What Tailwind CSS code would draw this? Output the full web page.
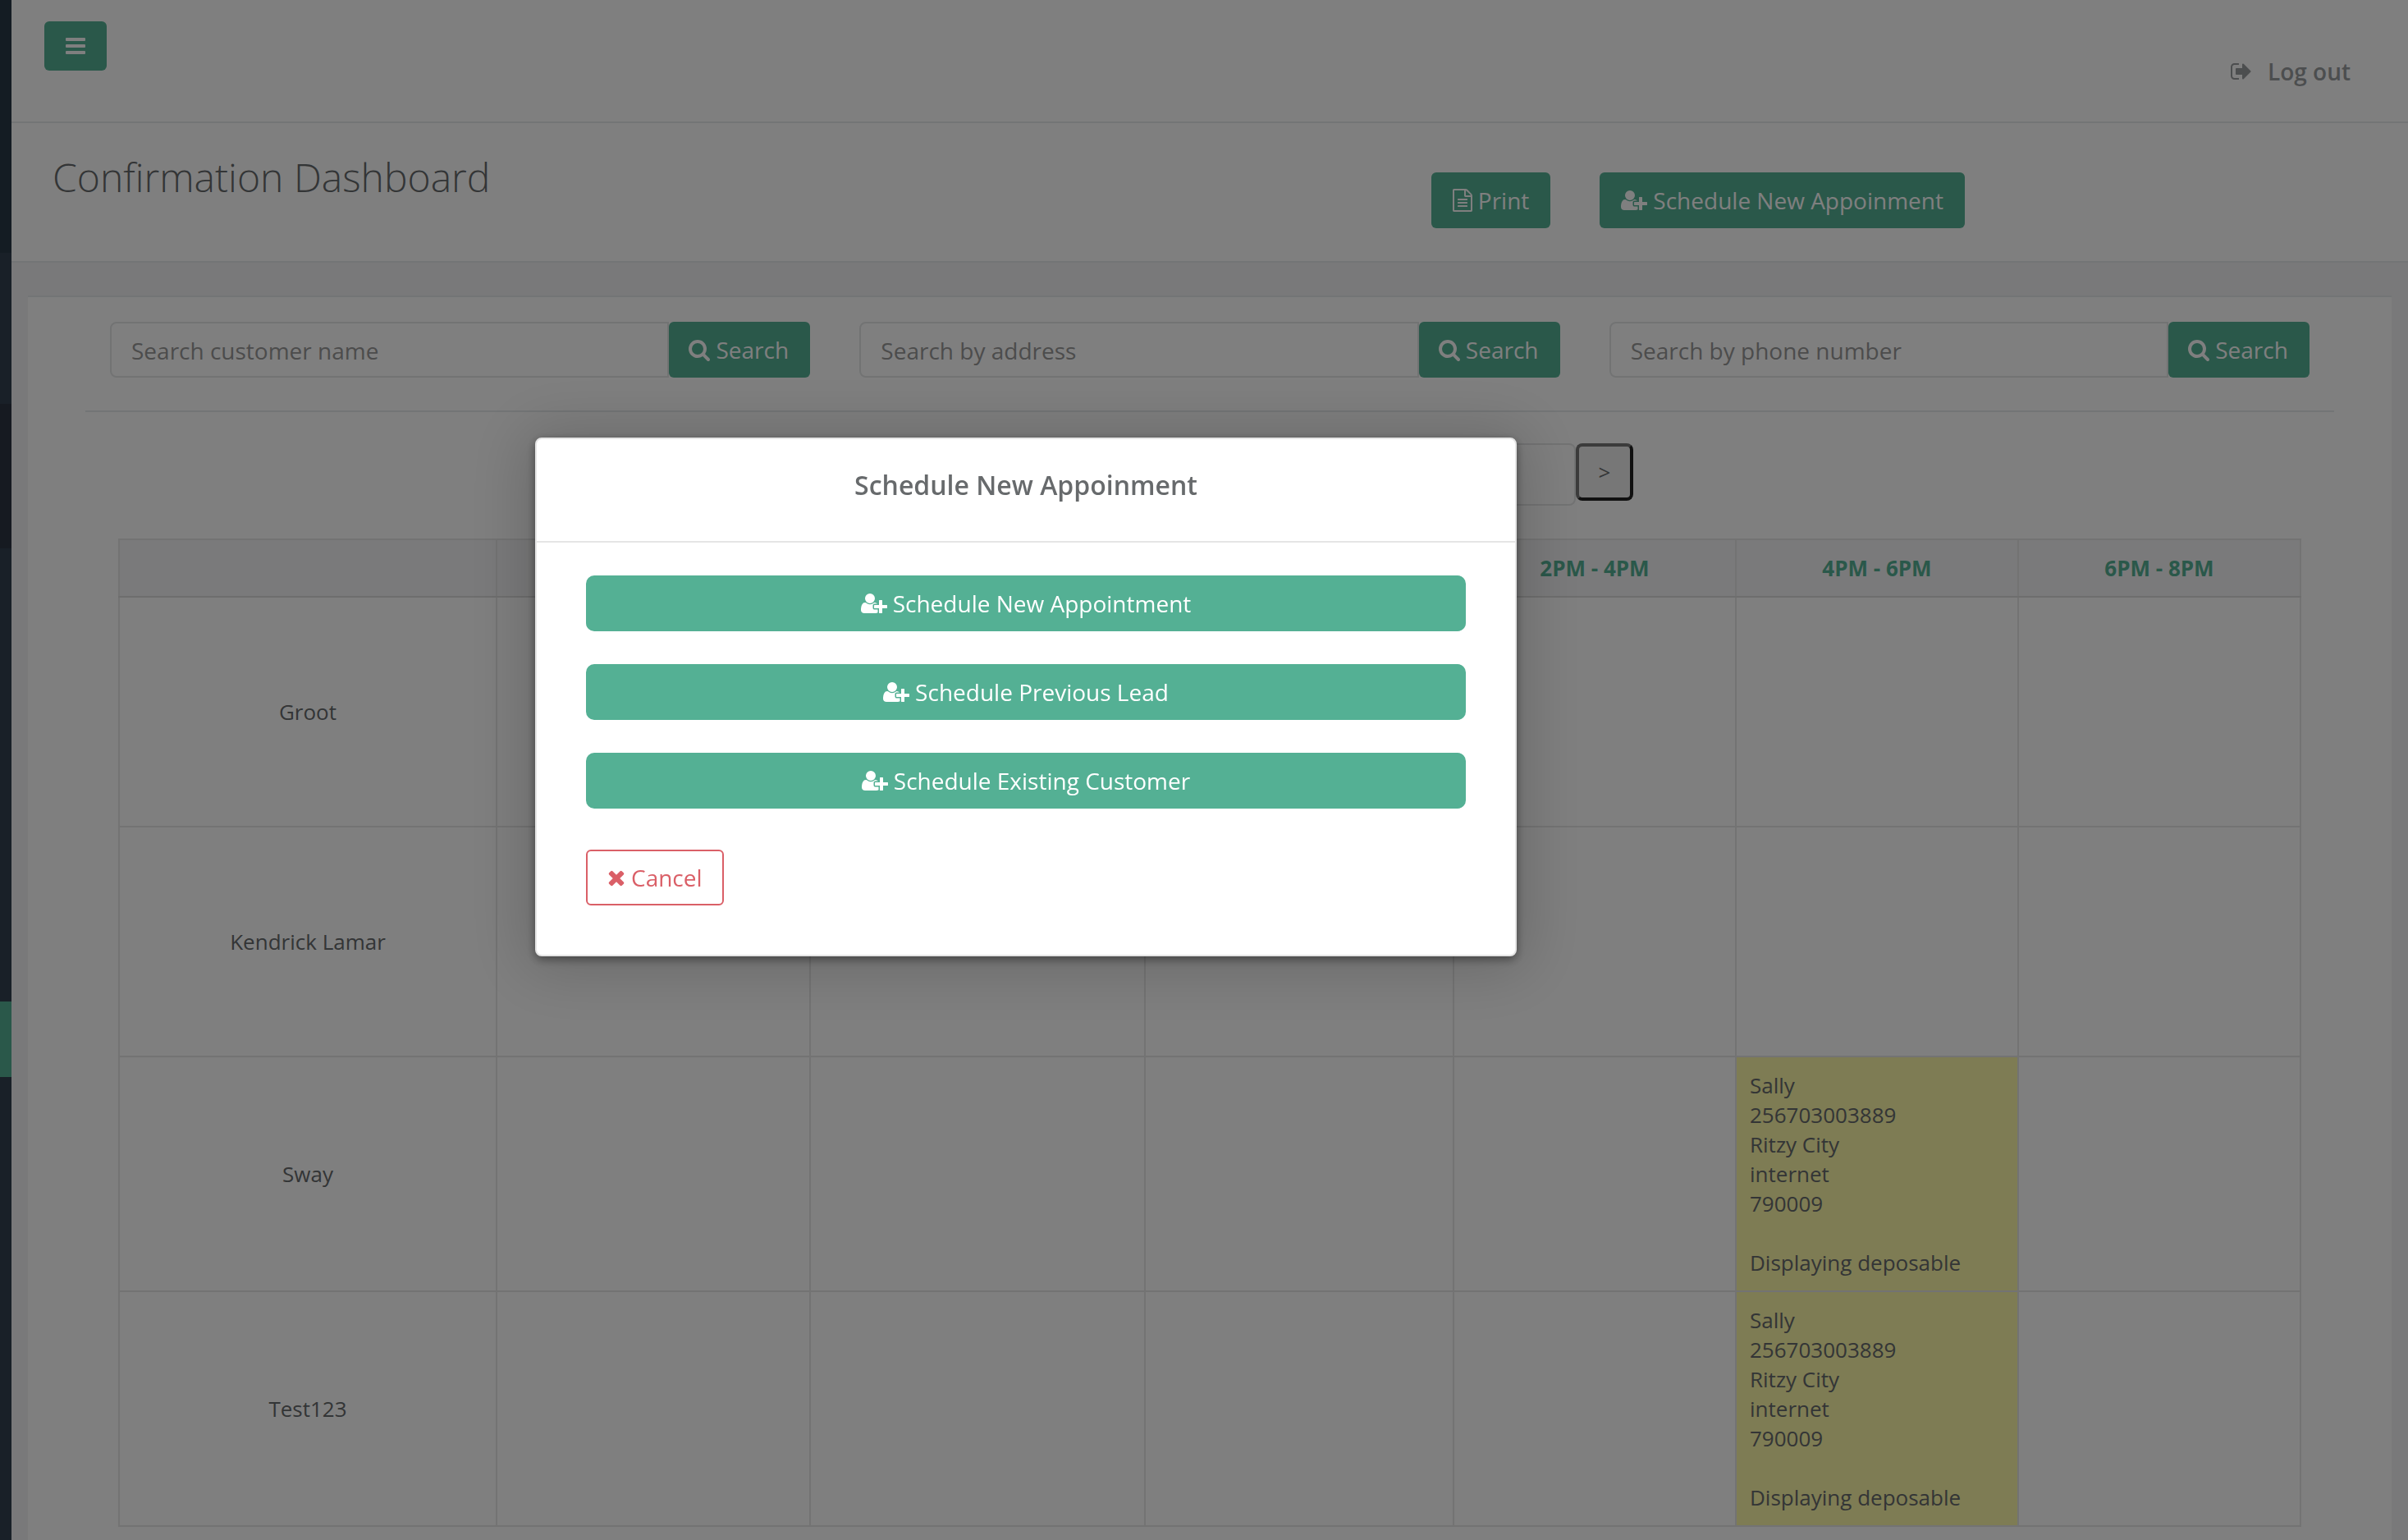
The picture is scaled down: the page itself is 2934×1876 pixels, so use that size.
<!DOCTYPE html>
<html lang="en">
<head>
<meta charset="utf-8">
<title>Confirmation Dashboard</title>
<script src="https://cdn.jsdelivr.net/npm/@tailwindcss/browser@4"></script>
</head>
<body class="font-['Open_Sans',sans-serif] text-[26px] leading-[36px] text-[#676a6c] bg-[#f3f3f4]">
<svg class="hidden" aria-hidden="true">
  <symbol id="user-plus" viewBox="0 0 2048 1792"><path d="M704 896q-159 0-271.500-112.500t-112.500-271.500 112.500-271.500 271.500-112.500 271.500 112.500 112.500 271.500-112.500 271.500-271.500 112.500zm960 128h352q13 0 22.500 9.500t9.500 22.500v192q0 13-9.500 22.500t-22.500 9.500h-352v352q0 13-9.500 22.500t-22.500 9.500h-192q-13 0-22.500-9.500t-9.500-22.500v-352h-352q-13 0-22.500-9.500t-9.500-22.500v-192q0-13 9.500-22.500t22.500-9.500h352v-352q0-13 9.500-22.500t22.500-9.500h192q13 0 22.500 9.500t9.500 22.500v352zm-736 224q0 52 38 90t90 38h256v238q-68 50-171 50h-874q-121 0-194-69t-73-190q0-53 3.500-103.500t14-109 26.500-108.500 43-97.500 62-81 85.500-53.500 111.500-20q19 0 39 17 79 61 154.500 91.500t164.500 30.500 164.500-30.500 154.500-91.500q20-17 39-17 132 0 217 96h-223q-52 0-90 38t-38 90v192z"/></symbol>
  <symbol id="search" viewBox="64 0 1664 1792"><path d="M1216 832q0-185-131.500-316.500t-316.500-131.500-316.500 131.500-131.500 316.500 131.500 316.500 316.500 131.500 316.500-131.500 131.500-316.500zm512 832q0 52-38 90t-90 38q-54 0-90-38l-343-342q-179 124-399 124-143 0-273.500-55.500t-225-150-150-225-55.500-273.500 55.500-273.500 150-225 225-150 273.500-55.500 273.500 55.500 225 150 150 225 55.500 273.500q0 220-124 399l343 343q37 37 37 90z"/></symbol>
  <symbol id="sign-out" viewBox="0 0 1792 1792"><path d="M704 1440q0 4 1 20t.5 26.500-3 23.500-10 19.500-20.500 6.500h-320q-119 0-203.500-84.500t-84.500-203.500v-704q0-119 84.500-203.500t203.500-84.500h320q13 0 22.500 9.500t9.500 22.500q0 4 1 20t.5 26.500-3 23.500-10 19.500-20.500 6.500h-320q-66 0-113 47t-47 113v704q0 66 47 113t113 47h312l11.500 1 11.500 3 8 5.500 7 9 2 13.500zm928-544q0 26-19 45l-544 544q-19 19-45 19t-45-19-19-45v-288h-448q-26 0-45-19t-19-45v-384q0-26 19-45t45-19h448v-288q0-26 19-45t45-19 45 19l544 544q19 19 19 45z"/></symbol>
  <symbol id="times" viewBox="192 0 1408 1792"><path d="M1490 1322q0 40-28 68l-136 136q-28 28-68 28t-68-28l-294-294-294 294q-28 28-68 28t-68-28l-136-136q-28-28-28-68t28-68l294-294-294-294q-28-28-28-68t28-68l136-136q28-28 68-28t68 28l294 294 294-294q28-28 68-28t68 28l136 136q28 28 28 68t-28 68l-294 294 294 294q28 28 28 68z"/></symbol>
  <symbol id="file-text" viewBox="128 0 1536 1792"><path d="M1596 380q28 28 48 76t20 88v1152q0 40-28 68t-68 28h-1344q-40 0-68-28t-28-68v-1600q0-40 28-68t68-28h896q40 0 88 20t76 48zm-444-244v376h376q-10-29-22-41l-313-313q-12-12-41-22zm384 1528v-1024h-416q-40 0-68-28t-28-68v-416h-768v1536h1280zm-1024-864q0-14 9-23t23-9h704q14 0 23 9t9 23v64q0 14-9 23t-23 9h-704q-14 0-23-9t-9-23v-64zm736 224q14 0 23 9t9 23v64q0 14-9 23t-23 9h-704q-14 0-23-9t-9-23v-64q0-14 9-23t23-9h704zm0 256q14 0 23 9t9 23v64q0 14-9 23t-23 9h-704q-14 0-23-9t-9-23v-64q0-14 9-23t23-9h704z"/></symbol>
</svg>

<div class="flex h-screen overflow-hidden">
  <!-- Collapsed navigation -->
  <aside class="flex w-[14px] shrink-0 flex-col bg-[#324150]">
    <div class="h-[308px] bg-[#293846]"></div>
    <div class="h-[184px]"></div>
    <div class="h-[176px] bg-[#2c3443]"></div>
    <div class="h-[552px]"></div>
    <div class="h-[92px] bg-[#54b094]"></div>
  </aside>

  <div class="flex min-w-0 flex-1 flex-col">
    <nav class="flex h-[150px] shrink-0 items-start justify-between border-b-2 border-[#e7eaec] bg-white pt-[26px] pr-[70px] pl-10">
      <button type="button" aria-label="Toggle menu" class="flex h-[60px] w-[76px] items-center justify-center rounded-md bg-[#54b094] text-white">
        <svg class="h-5 w-6 fill-current" viewBox="0 0 24 20"><rect width="24" height="4" rx="1"/><rect y="8" width="24" height="4" rx="1"/><rect y="16" width="24" height="4" rx="1"/></svg>
      </button>
      <a href="#" class="mt-[41px] flex items-center gap-[18px] text-[28px] leading-10 font-semibold text-[#999c9e]">
        <svg class="size-7 fill-current"><use href="#sign-out"/></svg>Log out
      </a>
    </nav>

    <header class="flex h-[170px] shrink-0 items-start justify-between border-b-2 border-[#e7eaec] bg-white pr-[540px] pl-[50px]">
      <h1 class="mt-[39px] text-[48px] leading-[53px] font-light">Confirmation Dashboard</h1>
      <div class="mt-[60px] flex gap-[60px] text-[28px] leading-10 text-white">
        <button type="button" class="flex h-[68px] items-center gap-[7px] rounded-md bg-[#54b094] px-[26px] pb-px"><svg class="h-7 w-6 fill-current"><use href="#file-text"/></svg>Print</button>
        <button type="button" class="flex h-[68px] items-center gap-[7px] rounded-md bg-[#54b094] px-[26px] pb-px"><svg class="h-7 w-8 fill-current"><use href="#user-plus"/></svg>Schedule New Appoinment</button>
      </div>
    </header>

    <main class="mx-5 mt-10 flex-1 border-t-2 border-[#e7eaec] bg-white px-[70px] pt-[30px]">
      <div class="grid grid-cols-3 gap-[60px] border-b-2 border-[#e7eaec] px-[30px] pb-10 text-[28px] leading-10">
        <form class="flex">
          <input type="text" aria-label="Customer name" placeholder="Search customer name" class="h-[68px] min-w-0 flex-1 rounded-l-lg border-2 border-[#e5e6e7] px-6 pt-[2px] placeholder:text-[#999]">
          <button type="button" class="flex w-[172px] items-center justify-center gap-[7px] rounded-md bg-[#54b094] pr-[2px] pb-px text-white"><svg class="h-7 w-[26px] fill-current"><use href="#search"/></svg>Search</button>
        </form>
        <form class="flex">
          <input type="text" aria-label="Address" placeholder="Search by address" class="h-[68px] min-w-0 flex-1 rounded-l-lg border-2 border-[#e5e6e7] px-6 pt-[2px] placeholder:text-[#999]">
          <button type="button" class="flex w-[172px] items-center justify-center gap-[7px] rounded-md bg-[#54b094] pr-[2px] pb-px text-white"><svg class="h-7 w-[26px] fill-current"><use href="#search"/></svg>Search</button>
        </form>
        <form class="flex">
          <input type="text" aria-label="Phone number" placeholder="Search by phone number" class="h-[68px] min-w-0 flex-1 rounded-l-lg border-2 border-[#e5e6e7] px-6 pt-[2px] placeholder:text-[#999]">
          <button type="button" class="flex w-[172px] items-center justify-center gap-[7px] rounded-md bg-[#54b094] pr-[2px] pb-px text-white"><svg class="h-7 w-[26px] fill-current"><use href="#search"/></svg>Search</button>
        </form>
      </div>

      <div class="mt-[38px] flex items-start justify-center">
        <button type="button" class="size-[70px] rounded-lg border-4 border-[#777] bg-[#efefef]">&lt;</button>
        <input type="text" aria-label="Date" class="h-[76px] w-[892px] rounded-lg border-2 border-[#e5e6e7] px-6">
        <button type="button" class="size-[70px] rounded-lg border-4 border-t-[#777] border-r-[#222] border-b-[#222] border-l-[#777] bg-[#efefef]">&gt;</button>
      </div>

      <div class="mt-10 px-10">
        <table class="w-full table-fixed border-collapse text-center">
          <colgroup>
            <col class="w-[460px]"><col class="w-[382px]"><col class="w-[408px]"><col class="w-[376px]"><col class="w-[344px]"><col class="w-[344px]"><col>
          </colgroup>
          <thead class="bg-[#f5f5f6] text-[#54b094]">
            <tr class="h-[70px]">
              <td class="border-2 border-[#e7e7e7] border-b-[#ddd]"></td>
              <th class="border-2 border-[#e7e7e7] border-b-[#ddd] font-bold">8AM - 10AM</th>
              <th class="border-2 border-[#e7e7e7] border-b-[#ddd] font-bold">10AM - 12PM</th>
              <th class="border-2 border-[#e7e7e7] border-b-[#ddd] font-bold">12PM - 2PM</th>
              <th class="border-2 border-[#e7e7e7] border-b-[#ddd] font-bold">2PM - 4PM</th>
              <th class="border-2 border-[#e7e7e7] border-b-[#ddd] font-bold">4PM - 6PM</th>
              <th class="border-2 border-[#e7e7e7] border-b-[#ddd] font-bold">6PM - 8PM</th>
            </tr>
          </thead>
          <tbody>
            <tr class="h-[280px]">
              <th class="border-2 border-[#e7e7e7] font-normal">Groot</th>
              <td class="border-2 border-[#e7e7e7]"></td><td class="border-2 border-[#e7e7e7]"></td><td class="border-2 border-[#e7e7e7]"></td><td class="border-2 border-[#e7e7e7]"></td><td class="border-2 border-[#e7e7e7]"></td><td class="border-2 border-[#e7e7e7]"></td>
            </tr>
            <tr class="h-[280px]">
              <th class="border-2 border-[#e7e7e7] font-normal">Kendrick Lamar</th>
              <td class="border-2 border-[#e7e7e7]"></td><td class="border-2 border-[#e7e7e7]"></td><td class="border-2 border-[#e7e7e7]"></td><td class="border-2 border-[#e7e7e7]"></td><td class="border-2 border-[#e7e7e7]"></td><td class="border-2 border-[#e7e7e7]"></td>
            </tr>
            <tr>
              <th class="border-2 border-[#e7e7e7] font-normal">Sway</th>
              <td class="border-2 border-[#e7e7e7]"></td><td class="border-2 border-[#e7e7e7]"></td><td class="border-2 border-[#e7e7e7]"></td><td class="border-2 border-[#e7e7e7]"></td>
              <td class="border-2 border-[#e7e7e7] bg-[#fcf8a8] p-4 text-left">Sally<br>256703003889<br>Ritzy City<br>internet<br>790009<br><br>Displaying deposable</td>
              <td class="border-2 border-[#e7e7e7]"></td>
            </tr>
            <tr>
              <th class="border-2 border-[#e7e7e7] font-normal">Test123</th>
              <td class="border-2 border-[#e7e7e7]"></td><td class="border-2 border-[#e7e7e7]"></td><td class="border-2 border-[#e7e7e7]"></td><td class="border-2 border-[#e7e7e7]"></td>
              <td class="border-2 border-[#e7e7e7] bg-[#fcf8a8] p-4 text-left">Sally<br>256703003889<br>Ritzy City<br>internet<br>790009<br><br>Displaying deposable</td>
              <td class="border-2 border-[#e7e7e7]"></td>
            </tr>
          </tbody>
        </table>
      </div>
    </main>
  </div>
</div>

<!-- Schedule dialog -->
<div class="fixed inset-0 flex items-start justify-center bg-black/50 pt-[533px] pr-[434px]">
  <section role="dialog" aria-labelledby="dialog-title" class="w-[1196px] rounded-lg border-2 border-[#e5e5e5] bg-white shadow-[0_4px_12px_rgba(0,0,0,0.4),0_4px_72px_14px_rgba(0,0,0,0.17)]">
    <div class="border-b-2 border-[#e5e5e5] pt-[34px] pb-[46px] text-center">
      <h2 id="dialog-title" class="text-[32px] leading-[44px] font-semibold">Schedule New Appoinment</h2>
    </div>
    <div class="flex flex-col gap-10 px-[60px] pt-10 pb-[60px] text-[28px] leading-10 text-white">
      <button type="button" class="flex h-[68px] items-center justify-center gap-[7px] rounded-[10px] bg-[#54b094] pb-px"><svg class="h-7 w-8 fill-current"><use href="#user-plus"/></svg>Schedule New Appointment</button>
      <button type="button" class="flex h-[68px] items-center justify-center gap-[7px] rounded-[10px] bg-[#54b094] pb-px"><svg class="h-7 w-8 fill-current"><use href="#user-plus"/></svg>Schedule Previous Lead</button>
      <button type="button" class="flex h-[68px] items-center justify-center gap-[7px] rounded-[10px] bg-[#54b094] pb-px"><svg class="h-7 w-8 fill-current"><use href="#user-plus"/></svg>Schedule Existing Customer</button>
      <button type="button" class="mt-[10px] flex h-[68px] items-center gap-[7px] self-start rounded-md border-2 border-[#da5f67] px-6 pb-px text-[#da5f67]"><svg class="h-7 w-[22px] fill-current"><use href="#times"/></svg>Cancel</button>
    </div>
  </section>
</div>
</body>
</html>
